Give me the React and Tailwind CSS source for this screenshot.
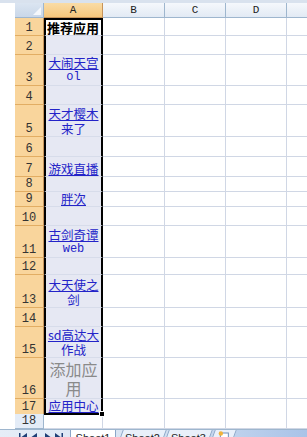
import React from 'react';

// Excel 2007 style sheet: column A selected (rows 1-17)
const rows = [
  { n: 1, h: 'h-[18px]', title: '推荐应用' },
  { n: 2, h: 'h-[19px]' },
  { n: 3, h: 'h-[31px]', lines: ['大闹天宫', 'ol'] },
  { n: 4, h: 'h-[19px]' },
  { n: 5, h: 'h-[32px]', lines: ['天才樱木', '来了'] },
  { n: 6, h: 'h-[20px]' },
  { n: 7, h: 'h-[20px]', lines: ['游戏直播'] },
  { n: 8, h: 'h-[15px]' },
  { n: 9, h: 'h-[15px]', lines: ['胖次'] },
  { n: 10, h: 'h-[19px]' },
  { n: 11, h: 'h-[32px]', lines: ['古剑奇谭', 'web'] },
  { n: 12, h: 'h-[17px]' },
  { n: 13, h: 'h-[33px]', lines: ['大天使之', '剑'] },
  { n: 14, h: 'h-[19px]' },
  { n: 15, h: 'h-[31px]', lines: ['sd高达大', '作战'] },
  { n: 16, h: 'h-[41px]', gray: ['添加应', '用'] },
  { n: 17, h: 'h-[15px]', lines: ['应用中心'], last: true },
  { n: 18, h: 'h-[15px]', plain: true },
];

const cjk = "font-['Noto_Sans_CJK_SC','Noto_Sans',sans-serif]";
const mono = "font-['Liberation_Mono','DejaVu_Sans_Mono',monospace]";
const grid = 'grid grid-cols-[15px_29px_59px_62px_61px_61px_1fr]';

function CellA({ row }) {
  if (row.plain) {
    return <div className="border-b border-r border-[#d0d7e5] bg-white" />;
  }
  const edge = `border-x-2 border-black ${row.n === 1 ? 'border-t-2' : ''} ${
    row.last ? 'border-b-2 relative' : 'border-b border-b-[#d7dcea]'
  }`;
  const bg = row.n === 1 ? 'bg-white' : 'bg-[#e6e8f3]';

  if (row.title) {
    return (
      <div className={`${edge} ${bg} flex items-end pl-[1px] ${cjk} text-[13px] font-bold leading-[15px] text-black`}>
        {row.title}
      </div>
    );
  }

  return (
    <div className={`${edge} ${bg} flex flex-col items-center justify-end`}>
      {row.lines &&
        row.lines.map((t, i) => (
          <span
            key={i}
            className={`${/^[a-z]+$/.test(t) ? mono + ' text-[12px]' : cjk + ' text-[12.5px]'} ${
              row.lines.length > 1 ? 'leading-[15px]' : 'leading-[14px]'
            } whitespace-nowrap text-[#2323c8] ${i === 0 ? 'underline underline-offset-[1px]' : ''}`}
          >
            {t}
          </span>
        ))}
      {row.gray &&
        row.gray.map((t, i) => (
          <span key={i} className={`${cjk} text-[16px] leading-[19px] text-[#8a8a8a]`}>
            {t}
          </span>
        ))}
      {row.last && (
        <span className="absolute -right-[4px] -bottom-[4px] h-[6px] w-[6px] border border-white bg-black" />
      )}
    </div>
  );
}

function Row({ row }) {
  const sel = !row.plain;
  return (
    <div className={`${grid} ${row.h} shrink-0`}>
      <div className="bg-white" />
      <div
        className={`flex items-end justify-center border-b ${
          sel
            ? 'border-[#e2ad63] bg-[#f9d59c] border-r border-r-[#c7945a]'
            : 'border-[#9eb6ce] bg-[#e4ecf7] border-r border-r-[#9eb6ce]'
        } ${mono} text-[12px] leading-[14px] text-[#333]`}
      >
        {row.n}
      </div>
      <CellA row={row} />
      <div className="border-b border-r border-[#d0d7e5] bg-white" />
      <div className="border-b border-r border-[#d0d7e5] bg-white" />
      <div className="border-b border-r border-[#d0d7e5] bg-white" />
      <div className="border-b border-[#d0d7e5] bg-white" />
    </div>
  );
}

function NavArrows() {
  return (
    <svg width="52" height="10" viewBox="0 0 52 10" className="mt-[2px]">
      <g fill="#1f3f77">
        <rect x="4" y="1" width="1.5" height="8" />
        <path d="M12 1 L6.5 5 L12 9 Z" />
        <path d="M22 1 L16.5 5 L22 9 Z" />
        <path d="M30 1 L35.5 5 L30 9 Z" />
        <path d="M40 1 L45.5 5 L40 9 Z" />
        <rect x="46.5" y="1" width="1.5" height="8" />
      </g>
    </svg>
  );
}

export default function App() {
  return (
    <div className="h-[437px] w-[307px] overflow-hidden bg-white flex flex-col">
      <div className="h-[3px] shrink-0 bg-[#d9e2ee]" />

      {/* column headers */}
      <div className={`${grid} h-[15px] shrink-0 ${mono} text-[11px] leading-[14px] text-[#222]`}>
        <div className="bg-white" />
        <div className="flex items-end justify-end border-b border-r border-[#9eb6ce] bg-gradient-to-b from-[#dbe5f1] to-[#c9d7e9] p-[2px]">
          <svg width="8" height="8" viewBox="0 0 8 8">
            <path d="M8 0 L8 8 L0 8 Z" fill="#f4f7fb" />
          </svg>
        </div>
        <div className="flex items-center justify-center border-b border-r border-[#c7945a] bg-gradient-to-b from-[#f9dca6] to-[#f6c77c]">A</div>
        <div className="flex items-center justify-center border-b border-r border-[#9eb6ce] bg-gradient-to-b from-[#f5f8fc] to-[#e2eaf4]">B</div>
        <div className="flex items-center justify-center border-b border-r border-[#9eb6ce] bg-gradient-to-b from-[#f5f8fc] to-[#e2eaf4]">C</div>
        <div className="flex items-center justify-center border-b border-r border-[#9eb6ce] bg-gradient-to-b from-[#f5f8fc] to-[#e2eaf4]">D</div>
        <div className="border-b border-[#9eb6ce] bg-gradient-to-b from-[#f5f8fc] to-[#e2eaf4]" />
      </div>

      {rows.map((r) => (
        <Row key={r.n} row={r} />
      ))}

      {/* sheet tabs */}
      <div className="flex h-[20px] shrink-0 items-start border-t border-[#9eb6ce] bg-gradient-to-r from-[#e6edf7] via-[#d6e2f2] to-[#a9c3e8] font-['Liberation_Sans',sans-serif] text-[11px] leading-[14px] text-[#1b1b1b]">
        <div className="w-[15px]" />
        <NavArrows />
        <div className="ml-[3px] flex h-[16px] w-[46px] items-start justify-center border-x border-b border-[#8ba6c8] bg-white pt-[1px]">Sheet1</div>
        <div className="-skew-x-[20deg] ml-[4px] flex h-[15px] w-[44px] items-start justify-center border-x border-b border-[#8ba6c8] bg-[#e9f0fa]">
          <span className="skew-x-[20deg] pt-[1px]">Sheet2</span>
        </div>
        <div className="-skew-x-[20deg] ml-[2px] flex h-[15px] w-[44px] items-start justify-center border-x border-b border-[#8ba6c8] bg-[#e9f0fa]">
          <span className="skew-x-[20deg] pt-[1px]">Sheet3</span>
        </div>
        <div className="-skew-x-[20deg] ml-[2px] flex h-[15px] w-[22px] items-start justify-center border-x border-b border-[#8ba6c8] bg-[#e9f0fa]">
          <svg width="12" height="11" viewBox="0 0 12 11" className="skew-x-[20deg] mt-[1px]">
            <rect x="3" y="2" width="8" height="8" fill="#fff" stroke="#6f8fb8" />
            <circle cx="3.5" cy="2.5" r="2.2" fill="#f2b33a" />
          </svg>
        </div>
      </div>
    </div>
  );
}
